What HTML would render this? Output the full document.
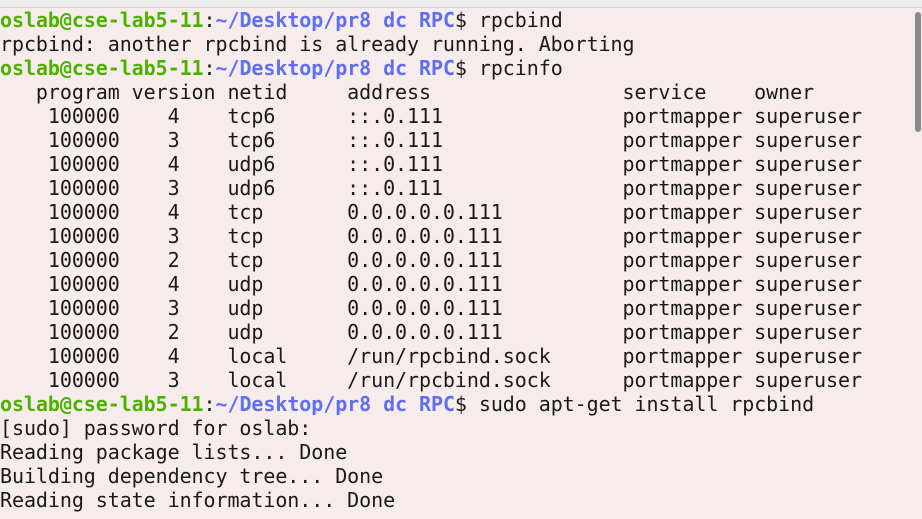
<html><head><style>
body{margin:0;width:922px;height:519px;background:#f6ecec;overflow:hidden;position:relative}
.top{position:absolute;left:0;top:0;width:922px;height:7px;background:#efefef;border-bottom:1px solid #cfcfcf}
pre{position:absolute;left:0;top:8px;margin:0;font-family:"DejaVu Sans Mono","Liberation Mono",monospace;font-size:20px;line-height:24px;letter-spacing:-0.07px;color:#1a1a1a}
.g{color:#4fb000;font-weight:bold}.b{color:#5f6ef2;font-weight:bold}
.sb{position:absolute;left:915px;top:12px;width:6px;height:120px;background:#8a8a8a;border-radius:3px}
</style></head><body><div class="top"></div><div class="sb"></div>
<pre><span class="g">oslab@cse-lab5-11</span>:<span class="b">~/Desktop/pr8 dc RPC</span>$ rpcbind
rpcbind: another rpcbind is already running. Aborting
<span class="g">oslab@cse-lab5-11</span>:<span class="b">~/Desktop/pr8 dc RPC</span>$ rpcinfo
   program version netid     address                service    owner
    100000    4    tcp6      ::.0.111               portmapper superuser
    100000    3    tcp6      ::.0.111               portmapper superuser
    100000    4    udp6      ::.0.111               portmapper superuser
    100000    3    udp6      ::.0.111               portmapper superuser
    100000    4    tcp       0.0.0.0.0.111          portmapper superuser
    100000    3    tcp       0.0.0.0.0.111          portmapper superuser
    100000    2    tcp       0.0.0.0.0.111          portmapper superuser
    100000    4    udp       0.0.0.0.0.111          portmapper superuser
    100000    3    udp       0.0.0.0.0.111          portmapper superuser
    100000    2    udp       0.0.0.0.0.111          portmapper superuser
    100000    4    local     /run/rpcbind.sock      portmapper superuser
    100000    3    local     /run/rpcbind.sock      portmapper superuser
<span class="g">oslab@cse-lab5-11</span>:<span class="b">~/Desktop/pr8 dc RPC</span>$ sudo apt-get install rpcbind
[sudo] password for oslab: 
Reading package lists... Done
Building dependency tree... Done
Reading state information... Done
</pre></body></html>
